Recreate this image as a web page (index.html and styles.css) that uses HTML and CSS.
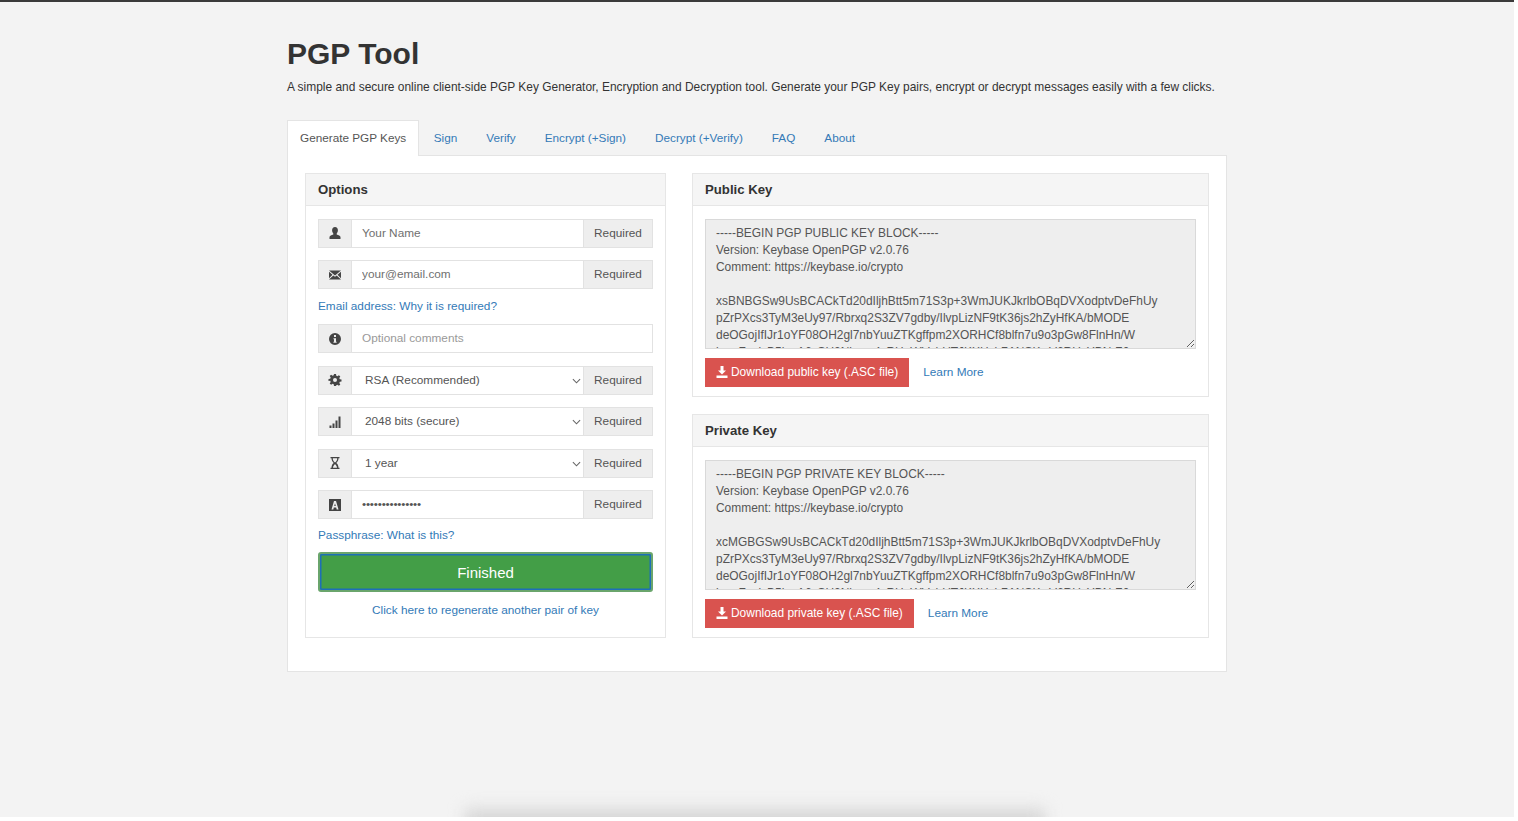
FILE: index.html
```html
<!DOCTYPE html>
<html lang="en">
<head>
<meta charset="UTF-8" />
<meta name="viewport" content="width=device-width, initial-scale=1" />
<title>PGP Tool</title>
<link rel="stylesheet" href="styles.css">
</head>
<body>
  <div class="page">
    <h1>PGP Tool</h1>
    <p class="lead">A simple and secure online client-side PGP Key Generator, Encryption and Decryption tool. Generate your PGP Key pairs, encrypt or decrypt messages easily with a few clicks.</p>

    <ul class="tabs">
      <li class="active"><a href="#">Generate PGP Keys</a></li>
      <li><a href="#">Sign</a></li>
      <li><a href="#">Verify</a></li>
      <li><a href="#">Encrypt (+Sign)</a></li>
      <li><a href="#">Decrypt (+Verify)</a></li>
      <li><a href="#">FAQ</a></li>
      <li><a href="#">About</a></li>
    </ul>

    <div class="tab-content">
      <section class="panel">
        <h2 class="panel-title">Options</h2>
        <div class="panel-body options">
          <div class="field">
            <span class="addon icon"><svg viewBox="0 0 14 14"><path d="M7 1c1.900 0 2.900 1.400 2.900 3.300 0 1.300-.5 2.400-1.200 3.100v1.100c1.700.6 3.800 1.200 3.800 2.500V13h-11v-2c0-1.300 2.100-1.900 3.800-2.500V7.400C4.600 6.700 4.100 5.600 4.100 4.300 4.100 2.400 5.100 1 7 1z"/></svg></span>
            <input type="text" placeholder="Your Name">
            <span class="addon">Required</span>
          </div>
          <div class="field">
            <span class="addon icon"><svg viewBox="0 0 14 14"><path d="M1 2.500h12L7 7.500z"/><path d="M1 3.800 4.500 6.700 1 10.200zM13 3.800 9.500 6.700 13 10.200z"/><path d="M5.300 7.400 7 8.800l1.700-1.400L13 11.500H1z"/></svg></span>
            <input type="text" placeholder="your@email.com">
            <span class="addon">Required</span>
          </div>
          <a class="help" href="#">Email address: Why it is required?</a>
          <div class="field">
            <span class="addon icon"><svg viewBox="0 0 14 14"><path fill-rule="evenodd" d="M7 1a6 6 0 1 1 0 12A6 6 0 0 1 7 1zM6 3v2h2V3zM5.500 6.200v1H6v2.600h-.6v1h3.200v-1H8V6.200z"/></svg></span>
            <input class="optional" type="text" placeholder="Optional comments">
          </div>
          <div class="field">
            <span class="addon icon"><svg viewBox="0 0 14 14"><path fill-rule="evenodd" d="M6 1h2l.3 1.700 1.100.5 1.500-1 1.400 1.400-1 1.500.5 1.100 1.700.3v2l-1.700.3-.5 1.100 1 1.500-1.400 1.400-1.500-1-1.100.5L8 13H6l-.3-1.700-1.100-.5-1.500 1-1.400-1.400 1-1.500-.5-1.100L.5 8V6l1.700-.3.5-1.100-1-1.500 1.400-1.400 1.500 1 1.100-.5zM7 5a2 2 0 1 0 0 4 2 2 0 0 0 0-4z"/></svg></span>
            <div class="select">RSA (Recommended)<svg class="chev" viewBox="0 0 10 6"><path d="M1 1l4 4 4-4"/></svg></div>
            <span class="addon">Required</span>
          </div>
          <div class="field">
            <span class="addon icon"><svg viewBox="0 0 14 14"><path d="M1.500 10.500h2V13h-2zM4.500 8.500h2V13h-2zM7.500 5.500h2V13h-2zM10.500 1.500h2V13h-2z"/></svg></span>
            <div class="select">2048 bits (secure)<svg class="chev" viewBox="0 0 10 6"><path d="M1 1l4 4 4-4"/></svg></div>
            <span class="addon">Required</span>
          </div>
          <div class="field">
            <span class="addon icon"><svg viewBox="0 0 14 14"><path fill-rule="evenodd" d="M2.500 1h9v1.300h-1c0 2.300-1 3.700-2.200 4.700 1.200 1 2.200 2.400 2.200 4.700h1V13h-9v-1.300h1c0-2.300 1-3.700 2.200-4.700-1.200-1-2.200-2.400-2.200-4.700h-1zM4.800 2.300c0 2.100.9 3.400 2.200 4.100 1.300-.7 2.200-2 2.200-4.100zM7 8.200c-1 .7-1.800 1.800-2 3.500h4c-.2-1.700-1-2.800-2-3.500z"/></svg></span>
            <div class="select">1 year<svg class="chev" viewBox="0 0 10 6"><path d="M1 1l4 4 4-4"/></svg></div>
            <span class="addon">Required</span>
          </div>
          <div class="field">
            <span class="addon icon"><svg viewBox="0 0 14 14"><path fill-rule="evenodd" d="M1 1h12v12H1zM6 3 3.500 11.500h1.800l.5-1.900h2.400l.5 1.900h1.800L8 3zM7 5.600l.8 2.500H6.200z"/></svg></span>
            <input class="secret" type="password" value="aaaaaaaaaaaaaaa">
            <span class="addon">Required</span>
          </div>
          <a class="help help-last" href="#">Passphrase: What is this?</a>
          <button class="finished" type="button">Finished</button>
          <a class="regen" href="#">Click here to regenerate another pair of key</a>
        </div>
      </section>

      <div class="keys">
        <section class="panel">
          <h2 class="panel-title">Public Key</h2>
          <div class="panel-body key-body">
            <textarea readonly>-----BEGIN PGP PUBLIC KEY BLOCK-----
Version: Keybase OpenPGP v2.0.76
Comment: https://keybase.io/crypto

xsBNBGSw9UsBCACkTd20dIljhBtt5m71S3p+3WmJUKJkrlbOBqDVXodptvDeFhUy
pZrPXcs3TyM3eUy97/Rbrxq2S3ZV7gdby/IlvpLizNF9tK36js2hZyHfKA/bMODE
deOGojIfIJr1oYF08OH2gl7nbYuuZTKgffpm2XORHCf8blfn7u9o3pGw8FlnHn/W
kmoFzqlcB5bwA6xSH2Nkwm4sRHeWVxhUTJKXHxb7ANSKwV6RUyYBNrZ0</textarea>
            <div class="actions">
              <a class="btn-danger" href="#"><svg viewBox="1 1 12 12"><path d="M5.500 1h3v4.500H11L7 9.500 3 5.500h2.500zM1.500 10.500h11V13h-11z"/></svg>Download public key (.ASC file)</a>
              <a class="more" href="#">Learn More</a>
            </div>
          </div>
        </section>
        <section class="panel">
          <h2 class="panel-title">Private Key</h2>
          <div class="panel-body key-body">
            <textarea readonly>-----BEGIN PGP PRIVATE KEY BLOCK-----
Version: Keybase OpenPGP v2.0.76
Comment: https://keybase.io/crypto

xcMGBGSw9UsBCACkTd20dIljhBtt5m71S3p+3WmJUKJkrlbOBqDVXodptvDeFhUy
pZrPXcs3TyM3eUy97/Rbrxq2S3ZV7gdby/IlvpLizNF9tK36js2hZyHfKA/bMODE
deOGojIfIJr1oYF08OH2gl7nbYuuZTKgffpm2XORHCf8blfn7u9o3pGw8FlnHn/W
kmoFzqlcB5bwA6xSH2Nkwm4sRHeWVxhUTJKXHxb7ANSKwV6RUyYBNrZ0</textarea>
            <div class="actions">
              <a class="btn-danger" href="#"><svg viewBox="1 1 12 12"><path d="M5.500 1h3v4.500H11L7 9.500 3 5.500h2.500zM1.500 10.500h11V13h-11z"/></svg>Download private key (.ASC file)</a>
              <a class="more" href="#">Learn More</a>
            </div>
          </div>
        </section>
      </div>
    </div>
  </div>
  <div class="bottom-shadow"></div>
</body>
</html>
```

FILE: styles.css
```css
html {
  background: #fff;
  height: 100%;
  overflow: hidden;
}
body {
  margin: 0;
  width: 1514px;
  height: 817px;
  background: #f3f3f3;
  color: #333;
  font-family: "Liberation Sans", Arial, sans-serif;
  font-size: 11.8px;
  line-height: 17px;
  border-top: 2px solid #3a3a3a;
  box-sizing: border-box;
  overflow: hidden;
  position: relative;
}
a {
  color: #337ab7;
  text-decoration: none;
}
.page {
  width: 940px;
  margin-left: 287px;
}
h1 {
  margin: 0;
  padding-top: 33px;
  font-size: 30px;
  line-height: 38px;
  font-weight: 700;
}
.lead {
  margin: 6px 0 0;
  white-space: nowrap;
  color: #333;
  font-size: 11.95px;
}

/* tabs */
.tabs {
  list-style: none;
  display: flex;
  margin: 24px 0 0;
  padding: 0;
  height: 35px;
  font-size: 11.75px;
}
.tabs a {
  display: block;
  padding: 9px 14.500px 0;
  height: 35px;
  box-sizing: border-box;
}
.tabs .active {
  background: #fff;
  border: 1px solid #e4e4e4;
  border-bottom: 0;
  height: 36px;
  box-sizing: border-box;
  position: relative;
  z-index: 1;
}
.tabs .active a {
  color: #555;
  padding: 8px 12px 0;
}
.tab-content {
  display: grid;
  grid-template-columns: 361px 517px;
  column-gap: 26px;
  align-items: start;
  background: #fff;
  border: 1px solid #e4e4e4;
  padding: 17px 17px 34px;
  height: 517px;
  box-sizing: border-box;
}

/* panels */
.panel {
  border: 1px solid #e6e6e6;
  background: #fff;
}
.panel-title {
  margin: 0;
  height: 31px;
  padding: 0 12px;
  background: #f5f5f5;
  border-bottom: 1px solid #e6e6e6;
  font-size: 13.2px;
  line-height: 31px;
  font-weight: 700;
  color: #333;
}
.panel-body {
  padding: 12.500px 12px 0;
}
.options {
  height: 431px;
  box-sizing: border-box;
}
.key-body {
  padding-bottom: 9.500px;
}
.keys {
  display: flex;
  flex-direction: column;
  gap: 17px;
}

/* input rows */
.field {
  display: flex;
  height: 29px;
  margin-bottom: 12.500px;
  border: 1px solid #e2e2e2;
  box-sizing: border-box;
  background: #fff;
}
.addon {
  flex: none;
  width: 69px;
  box-sizing: border-box;
  background: #eee;
  border-left: 1px solid #e2e2e2;
  color: #555;
  text-align: center;
  line-height: 27px;
}
.addon.icon {
  width: 33px;
  border-left: 0;
  border-right: 1px solid #e2e2e2;
  display: flex;
  align-items: center;
  justify-content: center;
}
.addon svg {
  width: 14px;
  height: 14px;
  fill: #444;
}
.field input {
  flex: 1;
  min-width: 0;
  border: 0;
  outline: 0;
  padding: 0 10px;
  font: inherit;
  color: #555;
  background: #fff;
}
.field input::placeholder {
  color: #6f6f6f;
}
.field input.optional::placeholder {
  color: #999;
}
.field input.secret {
  letter-spacing: -0.2px;
}
.select {
  flex: 1;
  position: relative;
  padding-left: 13px;
  line-height: 27px;
  color: #555;
}
.chev {
  position: absolute;
  right: 2px;
  top: 11px;
  width: 9px;
  height: 6px;
  fill: none;
  stroke: #666;
  stroke-width: 1.200;
}
.help {
  display: block;
  margin: -4px 0 9.500px;
}
.help-last {
  margin: -5px 0 8.500px;
}
.finished {
  display: block;
  width: 100%;
  height: 40px;
  background: #439e47;
  border: 2px solid #6aa56c;
  box-shadow: inset 0 0 0 1.500px #1d6fb8;
  border-radius: 3px;
  color: #fff;
  font: inherit;
  font-size: 15px;
  cursor: pointer;
}
.regen {
  display: block;
  margin-top: 10px;
  text-align: center;
}

/* key boxes */
textarea {
  display: block;
  width: 100%;
  height: 130.500px;
  box-sizing: border-box;
  padding: 5px 10px;
  margin: 0;
  background: #eee;
  border: 1px solid #d9d9d9;
  color: #555;
  font: inherit;
  font-size: 11.95px;
  overflow: hidden;
  white-space: pre;
  resize: vertical;
  outline: 0;
}
.actions {
  display: flex;
  align-items: center;
  margin-top: 8.500px;
}
.btn-danger {
  display: flex;
  align-items: center;
  height: 29px;
  padding: 0 11px;
  background: #d9534f;
  color: #fff;
  font-size: 11.95px;
}
.btn-danger svg {
  width: 12px;
  height: 12px;
  fill: #fff;
  margin-right: 3px;
}
.more {
  margin-left: 14px;
}

/* blurred shadow bleeding up from the bottom edge of the photo */
.bottom-shadow {
  position: absolute;
  left: 465px;
  width: 580px;
  bottom: -20px;
  height: 28px;
  background: #d6d6d6;
  filter: blur(8px);
}
```
